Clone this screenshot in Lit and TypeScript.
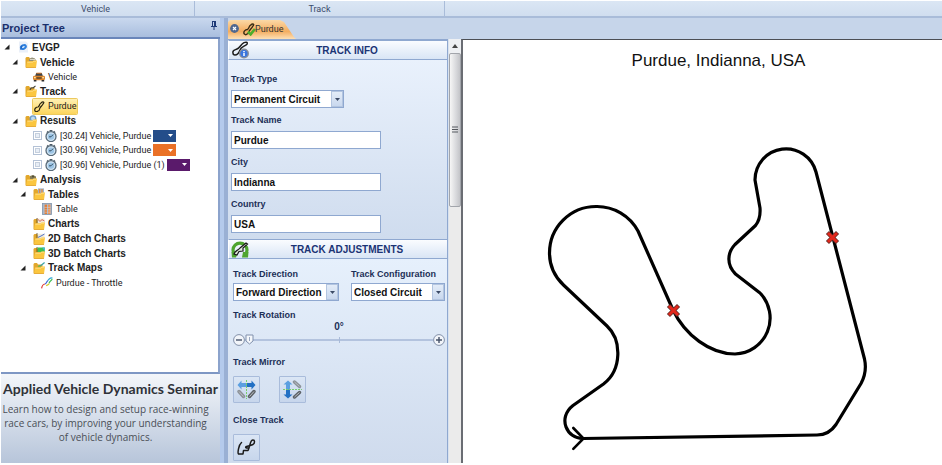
import { LitElement, html, svg, css, nothing } from "lit";
import { customElement } from "lit/decorators.js";
import { classMap } from "lit/directives/class-map.js";

const squiggle = "M2 11 C1 9 3 7 5 7 C7 6 6 4 8 3 C10 1 12 2 10 4 C9 6 8 6 7 8 C6 9 7 11 5 11 C4 12 3 12 2 11";

/* ---------- tree icons, drawn on a 12 x 12 grid ---------- */
const folder = (extra: unknown) => svg`
  <path d="M0.5 2 L1.5 1 H4 L5 2.5 H9.5 V11.5 H0.5 Z" fill="#e2a72c"/>
  ${extra}
  <path d="M1 11.8 L2 5.4 L7.5 5.4 L8.5 4.4 H12 L11 11.8 Z" fill="#fbc63f"/>
  <path d="M2.4 6.2 H7.8 L8.7 5.2 H11.3" stroke="#fee08b" stroke-width="0.9" fill="none"/>
  <path d="M1 11.6 H11" stroke="#dd9c28" stroke-width="0.7"/>`;

const treeIcons: Record<string, unknown> = {
  project: svg`
    <path d="M2 0.5 H9 L11 2.5 V11.5 H2 Z" fill="#eaf0f9"/>
    <ellipse cx="6.4" cy="6" rx="3.6" ry="2.7" fill="#2f7fdd" transform="rotate(-28 6.4 6)"/>
    <ellipse cx="6.4" cy="6" rx="1.5" ry="0.8" fill="#d9ecfd" transform="rotate(-28 6.4 6)"/>
    <path d="M3.6 8.6 L5 4.6" stroke="#1c5fc0" stroke-width="1"/>`,
  fVehicle: folder(svg`<path d="M4 4 Q5 1.5 7 1.5 Q10 1.5 11 4 V5 H4 Z" fill="#8f8b74"/><path d="M5 3.4 H10.4" stroke="#e2ded0"/>`),
  fTrack: folder(svg`<path d="M5 5 Q6 2 8 3 L10.5 0.8" stroke="#45443c" stroke-width="1.1" fill="none"/>`),
  fResults: folder(svg`<circle cx="8" cy="3.6" r="3.4" fill="#6f9cc4"/><circle cx="8" cy="3.6" r="2" fill="#bcd9f0"/>`),
  fAnalysis: folder(svg`<path d="M5 5 V2 L8 1 L11 2.5 V5 Z" fill="#857c55"/><circle cx="8" cy="2.6" r="1" fill="#4c4a3a"/>`),
  fTables: folder(svg`<rect x="5" y="0.4" width="6" height="5" fill="#9fb4cb"/><path d="M6.5 1 V5 M9 1 V5" stroke="#e58a3a" stroke-width="1.3"/>`),
  fCharts: folder(svg`<rect x="4.5" y="0.6" width="7" height="5" fill="#f1ead9"/><path d="M4.5 1 L7 3.4 L9 1.6 L11.5 3" stroke="#d4574a" stroke-width="0.9" fill="none"/><path d="M4 0 V5" stroke="#5a4a22" stroke-width="0.8"/>`),
  f2d: folder(svg`<rect x="4.5" y="0.8" width="7" height="5" fill="#f1ead9"/><path d="M5 4.4 L8 3 L11.5 1" stroke="#3e64c8" stroke-width="0.9" fill="none"/><path d="M4 0 V5" stroke="#5a4a22" stroke-width="0.8"/>`),
  f3d: folder(svg`<path d="M4.5 0.5 H11.8 V5 H4.5 Z" fill="#3fc04e"/><path d="M9 0.5 H11.8 V4 Z" fill="#46b5dc"/><path d="M4 0 V5" stroke="#5a4a22" stroke-width="0.8"/>`),
  fMaps: folder(svg`<path d="M5 4.6 L8 3.4 L11.6 0.6" stroke="#3ca3a8" stroke-width="1.3" fill="none"/><path d="M5 4.8 L7.4 3.8" stroke="#86bd33" stroke-width="1.2"/>`),
  car: svg`
    <path d="M2 5.4 L3.2 2 H8.8 L10 5.4 Z" fill="#40454a"/>
    <path d="M3.4 2.2 H8.6" stroke="#d5782a" stroke-width="1"/>
    <rect x="0" y="4.8" width="12" height="4.4" rx="1.4" fill="#d9822a"/>
    <path d="M3.4 7 H8.6" stroke="#51412c" stroke-width="1.4"/>
    <circle cx="1.9" cy="6.6" r="0.9" fill="#ffe9a5"/><circle cx="10.1" cy="6.6" r="0.9" fill="#ffe9a5"/>
    <path d="M0.8 9.8 H3.4 M8.6 9.8 H11.2" stroke="#2b2b2b" stroke-width="1.5"/>`,
  track: svg`<path d="${squiggle}" fill="none" stroke="#2b2410" stroke-width="1.2"/>`,
  watch: svg`
    <path d="M2 2.8 L3.4 1.4 M10 2.8 L8.6 1.4" stroke="#4d5b66" stroke-width="1.6"/>
    <rect x="4.6" y="0" width="2.8" height="1.8" fill="#4d5b66"/>
    <circle cx="6" cy="6.6" r="5" fill="#d3e6f5" stroke="#596b79" stroke-width="1.3"/>
    <circle cx="6" cy="6.6" r="3.2" fill="#9cc4e4"/>
    <path d="M6 6.8 L8.2 4.6 M6 6.8 H4" stroke="#2e4658" stroke-width="0.9"/>`,
  table: svg`
    <rect x="1.5" y="0.5" width="9" height="11" fill="#a9b9cb" stroke="#7f93aa" stroke-width="0.8"/>
    <rect x="3.6" y="1.6" width="2.4" height="9.4" fill="#e37f37"/><rect x="7" y="1.6" width="2.4" height="9.4" fill="#e9955a"/>
    <path d="M3.4 4.4 H9.6 M3.4 6.8 H9.6 M3.4 9.2 H9.6" stroke="#cfd8e2" stroke-width="0.5"/>`,
  throttle: svg`
    <path d="M0.6 11.4 C1 8.8 2 7.2 4 7" stroke="#df3a35" stroke-width="1.2" fill="none"/>
    <path d="M4 7 C6 6.6 5 4.6 7 3.4" stroke="#3b62d9" stroke-width="1.2" fill="none"/>
    <path d="M7 3.4 C8.4 1.4 10.6 0 11.4 1.4" stroke="#35a8d6" stroke-width="1.2" fill="none"/>
    <path d="M11.2 2 C10 4.4 8.6 4 8 6.4" stroke="#43c055" stroke-width="1.2" fill="none"/>
    <path d="M8 6.4 C8 8.4 6 7.4 5.4 9" stroke="#d5c928" stroke-width="1.2" fill="none"/>`,
};

interface TreeRow {
  level: number;
  icon: string;
  text: string;
  bold?: boolean;
  open?: boolean;
  selected?: boolean;
  color?: string;
}

const rows: TreeRow[] = [
  { level: 0, icon: "project", text: "EVGP", bold: true, open: true },
  { level: 1, icon: "fVehicle", text: "Vehicle", bold: true, open: true },
  { level: 2, icon: "car", text: "Vehicle" },
  { level: 1, icon: "fTrack", text: "Track", bold: true, open: true },
  { level: 2, icon: "track", text: "Purdue", selected: true },
  { level: 1, icon: "fResults", text: "Results", bold: true, open: true },
  { level: 2, icon: "watch", text: "[30.24] Vehicle, Purdue", color: "#234d8a" },
  { level: 2, icon: "watch", text: "[30.96] Vehicle, Purdue", color: "#ea7127" },
  { level: 2, icon: "watch", text: "[30.96] Vehicle, Purdue (1)", color: "#5a1a6b" },
  { level: 1, icon: "fAnalysis", text: "Analysis", bold: true, open: true },
  { level: 2, icon: "fTables", text: "Tables", bold: true, open: true },
  { level: 3, icon: "table", text: "Table" },
  { level: 2, icon: "fCharts", text: "Charts", bold: true },
  { level: 2, icon: "f2d", text: "2D Batch Charts", bold: true },
  { level: 2, icon: "f3d", text: "3D Batch Charts", bold: true },
  { level: 2, icon: "fMaps", text: "Track Maps", bold: true, open: true },
  { level: 3, icon: "throttle", text: "Purdue - Throttle" },
];

@customElement("project-tree")
class ProjectTree extends LitElement {
  static styles = css`
    :host { display: flex; flex-direction: column; min-height: 0; }
    * { box-sizing: border-box; }
    .head {
      display: flex; align-items: center; justify-content: space-between;
      height: 21px; padding: 0 2px 0 1px;
      background: linear-gradient(#c9d8ee, #a9bede);
      border-bottom: 2px solid #6a86ba;
    }
    h2 { margin: 0; font-size: 11px; font-weight: bold; color: #1a2f6c; }
    .pin { width: 8px; height: 10px; margin-bottom: 4px; }
    .body {
      flex: 1; min-height: 0; padding-top: 1px; background: #fff;
      border-right: 2px solid #8ca3cc; border-bottom: 2px solid #7e97c4;
    }
    .tree {
      display: grid; grid-auto-rows: 1fr; height: 250px;
      margin: 0; padding: 0; list-style: none;
    }
    .row { display: flex; align-items: center; font-size: 9px; color: #1c1c1c; white-space: nowrap; min-height: 0; }
    .l0 { padding-left: 3px; }
    .l1 { padding-left: 11px; }
    .l2 { padding-left: 19px; }
    .l3 { padding-left: 27px; }
    .twisty { width: 6px; height: 6px; margin-right: 7px; }
    .item { display: flex; align-items: center; gap: 3px; }
    .bold { font-size: 10px; font-weight: bold; color: #222; }
    .leaf { font-family: "Roboto", "Liberation Sans", sans-serif; }
    .selected .item {
      height: 15px; padding-right: 1px;
      background: linear-gradient(#fff0b4, #fcd55c); box-shadow: 0 0 0 1px #ecc95d; border-radius: 1px;
    }
    .icon { width: 12px; height: 12px; flex: none; }
    .check {
      appearance: none; width: 9px; height: 9px; margin: 0 3px 0 0;
      background: #e8eef6; border: 1px solid #b4c2d6; box-shadow: inset 0 0 0 1px #fff, inset 0 0 0 2px #c5cfdd;
    }
    .swatch {
      display: flex; align-items: center; justify-content: flex-end;
      width: 23px; height: 12px; margin-left: 2px; padding: 0 3px; border: 0;
    }
    .caret { width: 5px; height: 3px; }
  `;

  render() {
    return html`
      <div class="head">
        <h2>Project Tree</h2>
        <svg class="pin" viewBox="0 0 8 10" aria-hidden="true">
          <path d="M2 0.5 H6 M2.5 0.5 V5 M1 5.5 H7 M4 5.5 V9" stroke="#1e3a78" fill="none"/>
          <rect x="4" y="1" width="2" height="4" fill="#1e3a78"/>
        </svg>
      </div>
      <div class="body">
        <ul class="tree" role="tree" aria-label="Project Tree">
          ${rows.map((r) => this.renderRow(r))}
        </ul>
      </div>`;
  }

  private renderRow(r: TreeRow) {
    const classes = { row: true, [`l${r.level}`]: true, bold: !!r.bold, leaf: !r.bold, selected: !!r.selected };
    return html`
      <li class=${classMap(classes)} role="treeitem" aria-selected=${r.selected ? "true" : "false"}>
        <svg class="twisty" viewBox="0 0 6 6" aria-hidden="true">
          ${r.open ? svg`<path d="M5.5 0.5 V5.5 H0.5 Z" fill="#222"/>` : nothing}
        </svg>
        ${r.color ? html`<input class="check" type="checkbox" aria-label=${r.text} />` : nothing}
        <span class="item">
          <svg class="icon" viewBox="0 0 12 12" aria-hidden="true">${treeIcons[r.icon]}</svg>
          <span>${r.text}</span>
        </span>
        ${r.color
          ? html`<button class="swatch" style="background:${r.color}" aria-label="Line colour">
              <svg class="caret" viewBox="0 0 5 3"><path d="M0 0 H5 L2.5 3 Z" fill="#fff"/></svg>
            </button>`
          : nothing}
      </li>`;
  }
}

@customElement("drop-down")
class DropDown extends LitElement {
  static properties = { label: {}, options: { attribute: false } };
  declare label: string;
  declare options: string[];

  static styles = css`
    :host { display: block; }
    * { box-sizing: border-box; }
    label { display: flex; flex-direction: column; gap: var(--label-gap, 5px); font-size: 9px; line-height: 12px; font-weight: bold; color: #1c2f57; }
    .box { display: grid; height: 18px; border: 1px solid #8fa8d0; background: #fff; }
    select, .arrow { grid-area: 1 / 1; }
    select {
      appearance: none; border: 0; margin: 0; padding: 0 14px 0 2px; width: 100%; height: 16px; background: transparent;
      font: bold 10px "Liberation Sans", Arial, sans-serif; color: #111;
    }
    .arrow {
      justify-self: end; display: flex; align-items: center; justify-content: center;
      width: 12px; height: 16px; pointer-events: none;
      background: linear-gradient(#e3ecf8, #c9d8ee); border: 1px solid #b3c5e0;
    }
    svg { width: 5px; height: 3px; }
  `;

  render() {
    return html`
      <label>
        <span>${this.label}</span>
        <span class="box">
          <select>${this.options.map((o) => html`<option>${o}</option>`)}</select>
          <span class="arrow"><svg viewBox="0 0 5 3"><path d="M0 0 H5 L2.5 3 Z" fill="#3b4a66"/></svg></span>
        </span>
      </label>`;
  }
}

@customElement("track-form")
class TrackForm extends LitElement {
  static properties = { angle: { state: true } };
  declare angle: number;

  constructor() {
    super();
    this.angle = 0;
  }

  static styles = css`
    :host { display: flex; flex-direction: column; min-height: 0; overflow: hidden; }
    * { box-sizing: border-box; }
    .head {
      display: flex; align-items: center; flex: none; height: 20px; padding: 0 2px;
      background: linear-gradient(#fafcff, #d9e5f5);
      border: 1px solid #8fa8d0; border-left-color: #fff;
    }
    .head svg { width: 18px; height: 18px; flex: none; }
    h3 { flex: 1; margin: 0; text-align: center; font-size: 10px; font-weight: bold; color: #1b3475; }
    .section { border-right: 1px solid #8fa8d0; }
    .info {
      display: flex; flex-direction: column; gap: 6px; height: 179px; padding: 13px 66px 0 3px;
      background: linear-gradient(#e9f1fc, #cfdcee);
    }
    .type { width: 113px; }
    .fields { display: flex; flex-direction: column; gap: 7px; }
    .field, .group { display: flex; flex-direction: column; font-size: 9px; line-height: 12px; font-weight: bold; color: #1c2f57; }
    .field { gap: 5px; }
    .text {
      width: 100%; height: 18px; padding: 0 2px; border: 1px solid #8fa8d0; background: #fff;
      font: bold 10px "Liberation Sans", Arial, sans-serif; color: #111;
    }
    .adjust {
      --label-gap: 3px;
      flex: 1; display: flex; flex-direction: column; padding: 9px 2px 0 5px;
      background: linear-gradient(#e6f0fc, #cfdbed);
    }
    .pair { display: flex; justify-content: space-between; }
    .direction { width: 106px; }
    .config { width: 94px; }
    .group { margin-top: 8px; }
    .angle { text-align: center; font-size: 10px; }
    .slider { display: flex; align-items: center; height: 13px; }
    .round {
      width: 12px; height: 12px; flex: none; padding: 0; display: flex; border: 0; background: none;
    }
    .round svg { width: 12px; height: 12px; }
    .range {
      appearance: none; flex: 1; min-width: 0; height: 12px; margin: 0;
      background:
        linear-gradient(#a9bbd9, #a9bbd9) center / 1px 6px no-repeat,
        linear-gradient(#b3c3de, #b3c3de) center / 100% 2px no-repeat;
    }
    .range::-webkit-slider-thumb {
      appearance: none; width: 9px; height: 11px; border: 0;
      background: url("data:image/svg+xml,%3Csvg xmlns='http://www.w3.org/2000/svg' viewBox='0 0 9 11'%3E%3Cpath d='M1 1H8V7L4.500 10L1 7Z' fill='%23f4f7fb' stroke='%238090ac'/%3E%3Cpath d='M4.500 3V7' stroke='%239aa8c0'/%3E%3C/svg%3E") center / 9px 11px no-repeat;
    }
    .buttons { display: flex; gap: 19px; margin-top: 8px; }
    .tool {
      width: 27px; height: 27px; padding: 3px; border: 1px solid #a9bcdb; border-radius: 1px;
      background: linear-gradient(#dbe6f5, #c7d6ec);
    }
    .tool svg { display: block; width: 19px; height: 19px; }
    .mirror { margin-top: 10px; }
    .close { margin-top: 11px; }
  `;

  private step(delta: number) {
    this.angle = Math.min(360, Math.max(0, this.angle + delta));
  }

  private field(label: string, value: string) {
    return html`<label class="field"><span>${label}</span><input class="text" type="text" .value=${value} /></label>`;
  }

  render() {
    return html`
      <header class="head">
        <svg viewBox="0 0 18 18" aria-hidden="true">
          <path d="M2 12 C1 9 4 9 6 8 C9 7 10 3 13 1.600 C17 0 17 3 15 4 C12 6 10 6 9 9 C8 11 8 14 4 14 C2 14 2 13 2 12" fill="none" stroke="#1c1c1c" stroke-width="1.500"/>
          <circle cx="13" cy="12.500" r="5" fill="#8a8f98"/>
          <circle cx="13" cy="12.500" r="3.600" fill="#3976e0"/>
          <path d="M13 9.900 V11.100 M13 11.800 V14.900" stroke="#fff" stroke-width="1.500"/>
        </svg>
        <h3>TRACK INFO</h3>
      </header>
      <section class="section info">
        <drop-down class="type" .label=${"Track Type"} .options=${["Permanent Circuit"]}></drop-down>
        <div class="fields">
          ${this.field("Track Name", "Purdue")} ${this.field("City", "Indianna")} ${this.field("Country", "USA")}
        </div>
      </section>
      <header class="head">
        <svg viewBox="0 0 18 18" aria-hidden="true">
          <path d="M4 15 A7 7 0 1 1 14 15" fill="none" stroke="#4fa52f" stroke-width="3.200"/>
          <path d="M0.500 12 H7 L5 17.500 H1 Z M11 17.500 L12 12 H17.500 L17 17.500 Z" fill="#4fa52f"/>
          <path d="M3 14 C4 10 7 11 9 8 L15 3 L16.500 4 L12 8 V11 L8 11.500 L6 15 Z" fill="#dfead8" stroke="#1c1c1c" stroke-width="1.200"/>
        </svg>
        <h3>TRACK ADJUSTMENTS</h3>
      </header>
      <section class="section adjust">
        <div class="pair">
          <drop-down class="direction" .label=${"Track Direction"} .options=${["Forward Direction", "Reverse Direction"]}></drop-down>
          <drop-down class="config" .label=${"Track Configuration"} .options=${["Closed Circuit", "Open Circuit"]}></drop-down>
        </div>
        <div class="group">
          <label for="rotation">Track Rotation</label>
          <output class="angle" for="rotation">${this.angle}°</output>
          <div class="slider">
            <button class="round" aria-label="Rotate less" @click=${() => this.step(-1)}>
              <svg viewBox="0 0 12 12"><circle cx="6" cy="6" r="5.400" fill="#f2f5fa" stroke="#8391a9"/><path d="M3 6 H9" stroke="#47536a" stroke-width="1.400"/></svg>
            </button>
            <input id="rotation" class="range" type="range" min="0" max="360" .value=${String(this.angle)}
              @input=${(e: Event) => (this.angle = Number((e.target as HTMLInputElement).value))} />
            <button class="round" aria-label="Rotate more" @click=${() => this.step(1)}>
              <svg viewBox="0 0 12 12"><circle cx="6" cy="6" r="5.400" fill="#f2f5fa" stroke="#8391a9"/><path d="M3 6 H9 M6 3 V9" stroke="#47536a" stroke-width="1.400"/></svg>
            </button>
          </div>
        </div>
        <div class="group mirror">
          <span>Track Mirror</span>
          <div class="buttons">
            <button class="tool" aria-label="Mirror horizontally">
              <svg viewBox="0 0 19 19">
                <path d="M0.500 5 L4.500 0.500 V3 H9.500 V7 H4.500 V9.500 Z" fill="#5b9fe0"/>
                <path d="M18.500 5 L14.500 0.500 V3 H9.500 V7 H14.500 V9.500 Z" fill="#2270c4"/>
                <path d="M9.500 0 V19" stroke="#79cf6c" stroke-dasharray="2 1"/>
                <path d="M2 11.500 L6.500 16.500" stroke="#8c9298" stroke-width="3.400" stroke-linecap="round"/>
                <path d="M17 11.500 L12.500 16.500" stroke="#5c6166" stroke-width="3.400" stroke-linecap="round"/>
                <path d="M2 11.500 L6.500 16.500 M17 11.500 L12.500 16.500" stroke="#b9bec4" stroke-width="1"/>
              </svg>
            </button>
            <button class="tool" aria-label="Mirror vertically">
              <svg viewBox="0 0 19 19">
                <path d="M5 0.500 L0.500 4.500 H3 V9.500 H7 V4.500 H9.500 Z" fill="#5b9fe0"/>
                <path d="M5 18.500 L0.500 14.500 H3 V9.500 H7 V14.500 H9.500 Z" fill="#2270c4"/>
                <path d="M0 9.500 H19" stroke="#79cf6c" stroke-dasharray="2 1"/>
                <path d="M11.500 2 L16.500 6.500" stroke="#8c9298" stroke-width="3.400" stroke-linecap="round"/>
                <path d="M11.500 17 L16.500 12.500" stroke="#5c6166" stroke-width="3.400" stroke-linecap="round"/>
                <path d="M11.500 2 L16.500 6.500 M11.500 17 L16.500 12.500" stroke="#b9bec4" stroke-width="1"/>
              </svg>
            </button>
          </div>
        </div>
        <div class="group close">
          <span>Close Track</span>
          <div class="buttons">
            <button class="tool" aria-label="Close track">
              <svg viewBox="0 0 19 19">
                <path d="M4.500 4.500 C1.500 7 0.500 15 1.500 16 H6 L6.500 12.500 H11 L12 10 C8.500 10.500 8 9 9.500 8.500 C12 8 14 7.500 16 6.500 C18 5 18 2 16 2 C13.500 2 13.500 5 12 10"
                  fill="none" stroke="#1b1b1b" stroke-width="1.500" stroke-linecap="round" stroke-linejoin="round"/>
              </svg>
            </button>
          </div>
        </div>
      </section>`;
  }
}

@customElement("track-canvas")
class TrackCanvas extends LitElement {
  static styles = css`
    :host { display: flex; flex-direction: column; min-width: 0; min-height: 0; background: #fff; border-top: 1px solid #4c4f55; border-left: 2px solid #6a6d73; box-sizing: border-box; }
    h1 { flex: none; margin: 0; padding: 10px 0 0 32px; height: 40px; box-sizing: border-box; text-align: center; font-weight: normal; font-size: 17px; line-height: 22px; color: #111; }
    svg { flex: 1; min-height: 0; width: 100%; }
  `;

  render() {
    const markers = [[673, 310], [832, 237]];
    return html`
      <h1>Purdue, Indianna, USA</h1>
      <svg viewBox="463 80 479 383" preserveAspectRatio="xMidYMin meet" role="img" aria-label="Track map">
        <path fill="none" stroke="#000" stroke-width="3.2" stroke-linejoin="round" d="
          M583 438.500 L817 435 C825 435 831 432 836 424.500 L861 383.500
          C865 376 866.500 368 864.500 359 L816 172
          A31 31 0 0 0 755 180 L760 208 C760.500 215 760 220 755.500 225.500 L735 244.500
          C727 253 726.500 265 735.500 274 L760 293
          A36 36 0 0 1 735 354 C710 354 685 335 673 310 L638 231
          A46.500 46.500 0 0 0 596 206.500 A46.500 46.500 0 0 0 549.500 253
          C549.500 266 555 277 563.500 285 L607 326
          C622 340 622 370 603.500 384 L573 405.500 C557 418 567 439 583 438.500"/>
        <path d="M573.300 428 L583.500 438.500 L573.300 448.800" fill="none" stroke="#000" stroke-width="2.600" stroke-linecap="round"/>
        ${markers.map(([x, y]) => svg`
          <path d="M${x - 3} ${y - 3} l7 7 m0 -7 l-7 7" stroke="#5c2a26" stroke-width="4.400" stroke-linecap="square"/>
          <path d="M${x - 3} ${y - 3} l7 7 m0 -7 l-7 7" stroke="#e2281c" stroke-width="3" stroke-linecap="square"/>`)}
      </svg>`;
  }
}

@customElement("app-root")
class AppRoot extends LitElement {
  static styles = css`
    :host {
      display: flex; flex-direction: column; height: 100vh; box-sizing: border-box; padding: 1px 0 2px 1px;
      background: #fff; font-family: "Liberation Sans", Arial, sans-serif;
    }
    * { box-sizing: border-box; }
    .ribbon {
      display: flex; flex: none; height: 17px; background: linear-gradient(#dbe6f4, #d0deef);
      border-bottom: 2px solid #a9bcd9; font-size: 9px; line-height: 17px; color: #3c4c6c; text-align: center;
      font-family: "Roboto", "Liberation Sans", sans-serif;
    }
    .cell { border-right: 1px solid #a9bcd9; }
    .c1 { width: 194px; padding-right: 4px; }
    .c2 { width: 250px; }
    .work { flex: 1; display: flex; min-height: 0; background: #c6d5ea; }
    .side { display: flex; flex-direction: column; width: 219px; flex: none; }
    project-tree { flex: 1; }
    .promo {
      flex: none; height: 89px; padding: 6px 0 0; text-align: center;
      font-family: "Open Sans", "Noto Sans", sans-serif; color: #4a4f57;
      background: linear-gradient(#f3f6fa, #b7c5da); white-space: nowrap;
    }
    .promo h2 { margin: 0; font-family: "Lato", "Open Sans", sans-serif; font-size: 14px; line-height: 18px; color: #2f3238; }
    .promo p { margin: 4px 10px 0 0; font-size: 10px; line-height: 14px; }
    .split { flex: none; width: 8px; background: linear-gradient(90deg, #b4caec 0 4px, #9ab0d4 4px 8px); }
    .doc { flex: 1; display: flex; flex-direction: column; min-width: 0; }
    .tabs { flex: none; display: flex; height: 21px; padding-top: 2px; }
    .tab {
      display: flex; align-items: center; gap: 3px; width: 68px; height: 19px; padding: 0 0 2px 2px; border: 0;
      background: linear-gradient(#fbd9a6, #f4ad60 60%, #fde0b6);
      clip-path: polygon(0 2px, 2px 0, 52px 0, 56px 2px, 66px 17px, 68px 19px, 0 19px);
      font: 9px "Roboto", "Liberation Sans", sans-serif; color: #333; white-space: nowrap;
    }
    .x { width: 9px; height: 9px; flex: none; }
    .tabicon { width: 14px; height: 14px; flex: none; margin-right: -4px; }
    .panes { flex: 1; display: flex; min-height: 0; }
    track-form { width: 220px; flex: none; border-top: 1px solid #8fa8d0; }
    .bar { flex: none; width: 13px; display: flex; flex-direction: column; background: #ebebeb; border-left: 1px solid #d9e2ee; }
    .up { height: 14px; padding: 0; border: 0; background: #eef0f3; display: flex; align-items: center; justify-content: center; }
    .up svg { width: 6px; height: 4px; }
    .thumb {
      height: 154px; display: flex; align-items: center; justify-content: center;
      background: linear-gradient(90deg, #f6f6f6, #d8d9dc 60%, #c3c4c8); border: 1px solid #a2a5ab; border-radius: 2px;
    }
    .thumb svg { width: 6px; height: 8px; }
    track-canvas { flex: 1; }
  `;

  render() {
    return html`
      <nav class="ribbon" aria-label="Ribbon groups">
        <span class="cell c1">Vehicle</span>
        <span class="cell c2">Track</span>
      </nav>
      <main class="work">
        <aside class="side">
          <project-tree></project-tree>
          <div class="promo">
            <h2>Applied Vehicle Dynamics Seminar</h2>
            <p>Learn how to design and setup race-winning<br />race cars, by improving your understanding<br />of vehicle dynamics.</p>
          </div>
        </aside>
        <div class="split"></div>
        <div class="doc">
          <div class="tabs">
            <button class="tab">
              <svg class="x" viewBox="0 0 9 9" aria-hidden="true"><circle cx="4.500" cy="4.500" r="4.400" fill="#51688f"/><path d="M3 3 L6 6 M6 3 L3 6" stroke="#fff" stroke-width="1.200"/></svg>
              <svg class="tabicon" viewBox="0 0 13 13" aria-hidden="true">
                <path d=${squiggle} fill="none" stroke="#3a2c14" stroke-width="1.300"/>
                <path d="M5.500 9 L8 11.500 L12 6.500" fill="none" stroke="#4cae2c" stroke-width="2.400"/>
              </svg>
              <span>Purdue</span>
            </button>
          </div>
          <div class="panes">
            <track-form></track-form>
            <div class="bar">
              <button class="up" aria-label="Scroll up"><svg viewBox="0 0 6 4"><path d="M3 0 L6 4 H0 Z" fill="#444"/></svg></button>
              <div class="thumb"><svg viewBox="0 0 6 8"><path d="M0 1 H6 M0 3.500 H6 M0 6 H6" stroke="#55585e"/></svg></div>
            </div>
            <track-canvas></track-canvas>
          </div>
        </div>
      </main>`;
  }
}
